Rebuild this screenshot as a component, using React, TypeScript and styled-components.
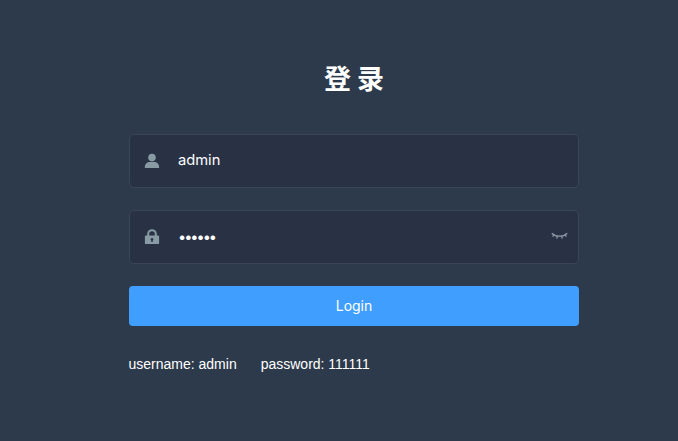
import React from "react";
import styled, { createGlobalStyle } from "styled-components";

const Global = createGlobalStyle`
  html, body { margin: 0; padding: 0; height: 100%; background: #2d3a4b; }
  #root { height: 100%; }
  * { box-sizing: border-box; }
`;

const Page = styled.div`
  width: 678px;
  height: 441px;
  background: #2d3a4b;
  overflow: hidden;
  padding: 59px 0 0 129px;
  font-family: "Liberation Sans", Arial, sans-serif;
`;

const Form = styled.form`
  width: 450px;
  display: flex;
  flex-direction: column;
`;

const Title = styled.h3`
  margin: 0 0 37px;
  height: 38px;
  line-height: 38px;
  text-align: center;
  font-size: 27px;
  font-weight: 700;
  color: #ffffff;
  font-family: "Noto Sans CJK SC", "Liberation Sans", sans-serif;
`;

const Field = styled.div`
  height: 54px;
  margin-bottom: 22px;
  display: flex;
  align-items: center;
  background: #293245;
  border: 1px solid #3a4559;
  border-radius: 5px;
  position: relative;
`;

const IconSlot = styled.span`
  width: 44px;
  display: flex;
  justify-content: center;
  color: #889aa4;
  margin-right: 4px;
`;

const Input = styled.input<{ $masked?: boolean }>`
  flex: 1;
  min-width: 0;
  height: 100%;
  padding: 0 36px 2px 0;
  border: 0;
  outline: 0;
  background: transparent;
  color: #ffffff;
  font-family: Inter, "Liberation Sans", sans-serif;
  font-size: ${(p) => (p.$masked ? "14.5px" : "14.7px")};
  letter-spacing: ${(p) => (p.$masked ? "-2px" : "0")};
`;

const Eye = styled.span`
  position: absolute;
  right: 10px;
  top: 21px;
  display: flex;
  color: #8a95a3;
`;

const Submit = styled.button`
  height: 40px;
  border: 0;
  border-radius: 4px;
  background: #409eff;
  color: #ffffff;
  font-family: Inter, "Liberation Sans", sans-serif;
  font-size: 14px;
  margin-bottom: 30px;
  padding: 0 0 1px;
`;

const Tips = styled.div`
  display: flex;
  gap: 24px;
  color: #ffffff;
  font-size: 14px;
  line-height: 16px;
  margin-left: -0.5px;
`;

const UserIcon = () => (
  <svg width="16" height="16" viewBox="0 0 16 16" fill="currentColor" aria-hidden="true">
    <circle cx="8" cy="4.6" r="3.8" />
    <path d="M.8 14.200c0-3.500 2.700-5.200 4.800-5.200h4.800c2.100 0 4.800 1.700 4.800 5.200 0 .6-.4.9-1 .9H1.800c-.6 0-1-.3-1-.9z" />
  </svg>
);

const LockIcon = () => (
  <svg width="16" height="16" viewBox="0 0 16 16" aria-hidden="true">
    <path fill="currentColor" fillRule="evenodd" d="M3.200 6.400V5a4.800 4.800 0 0 1 9.600 0v1.400h1.400c.6 0 .9.4.9.9v6.900c0 .5-.3.9-.9.9H1.800c-.6 0-.9-.4-.9-.9V7.300c0-.5.3-.9.9-.9zm2 0h5.600V5a2.800 2.800 0 0 0-5.600 0zM8 9a1.400 1.400 0 0 0-.7 2.600V13h1.400v-1.400A1.400 1.400 0 0 0 8 9z" />
  </svg>
);

const EyeOffIcon = () => (
  <svg width="17" height="10" viewBox="0 0 17 10" fill="none" stroke="currentColor" strokeWidth="1.300" aria-hidden="true">
    <path d="M.8 1.200c2 2 4.500 3 7.700 3s5.700-1 7.700-3" />
    <path d="M3 3l-1.400 1.600M6.400 4.200 5.800 6.600M10.600 4.200l.6 2.400M14 3l1.400 1.600" />
  </svg>
);

export default function App() {
  return (
    <Page>
      <Global />
      <Form onSubmit={(e) => e.preventDefault()}>
        <Title>登 录</Title>
        <Field>
          <IconSlot><UserIcon /></IconSlot>
          <Input type="text" defaultValue="admin" />
        </Field>
        <Field>
          <IconSlot><LockIcon /></IconSlot>
          <Input $masked type="password" defaultValue="111111" />
          <Eye><EyeOffIcon /></Eye>
        </Field>
        <Submit type="submit">Login</Submit>
        <Tips>
          <span>username: admin</span>
          <span>password: 111111</span>
        </Tips>
      </Form>
    </Page>
  );
}
